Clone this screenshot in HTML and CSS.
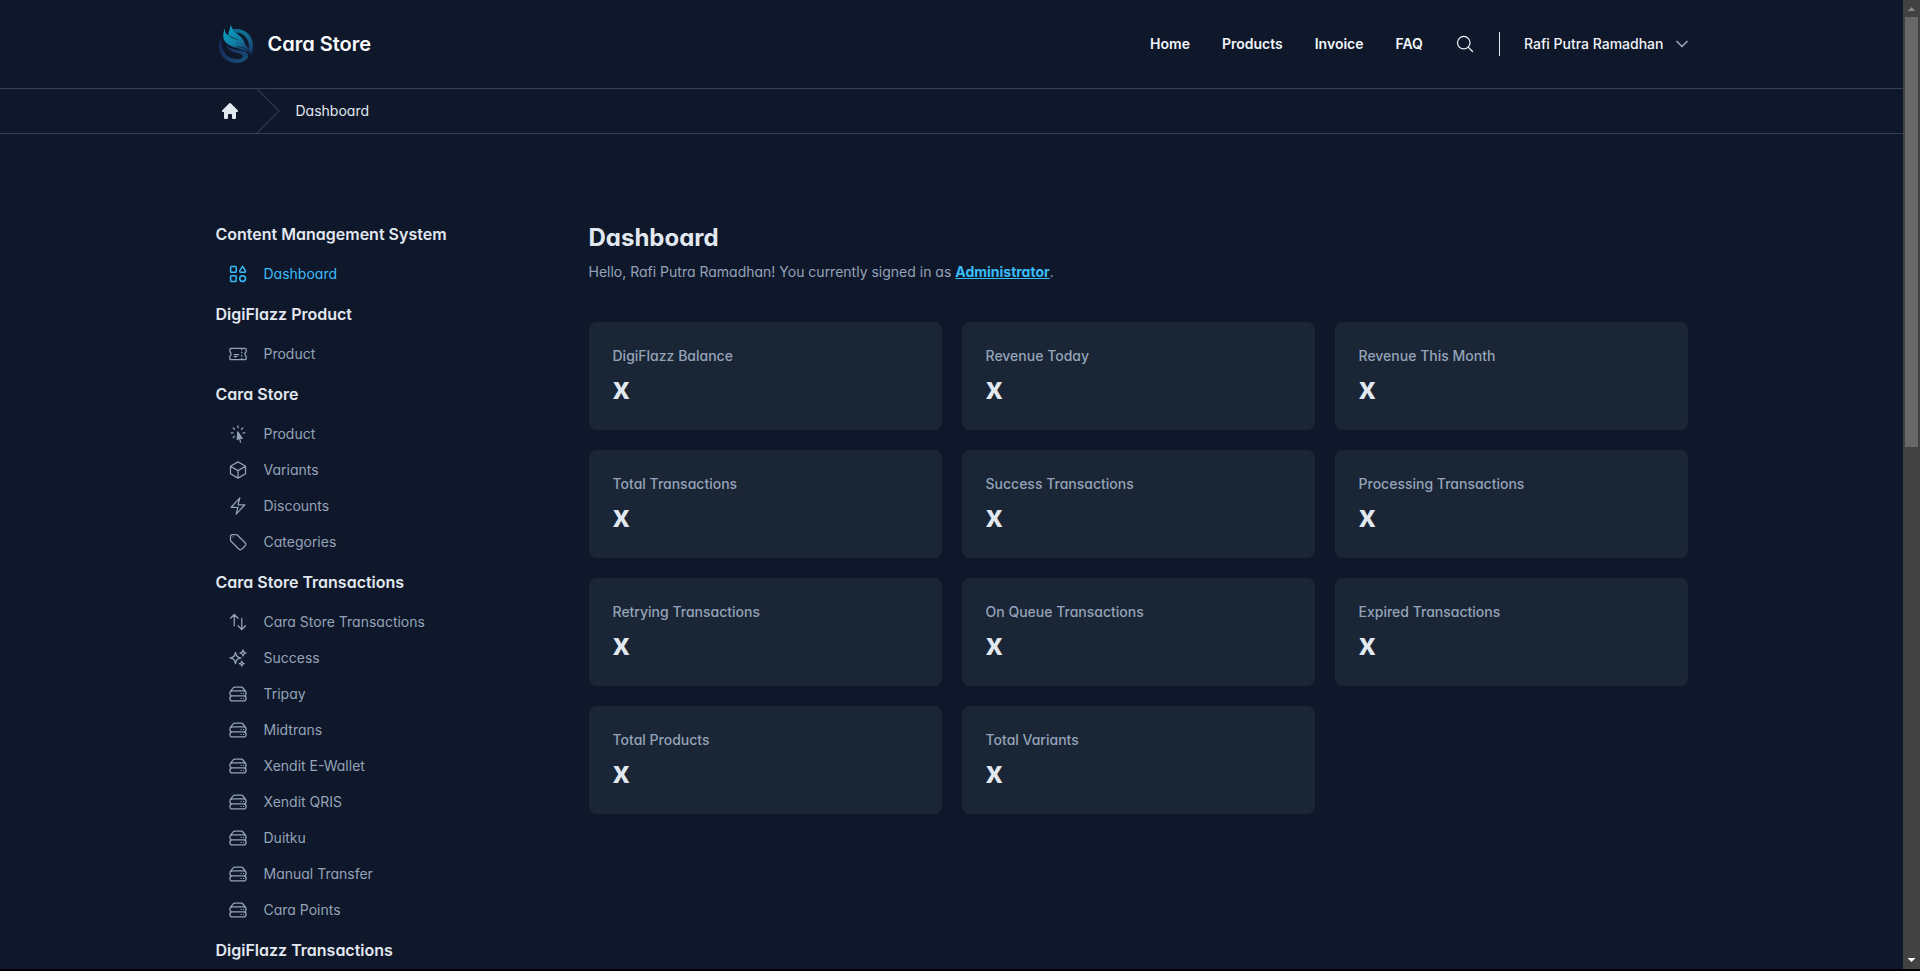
FILE: index.html
```html
<!DOCTYPE html>
<html lang="en">
<head>
<meta charset="utf-8">
<meta name="viewport" content="width=device-width, initial-scale=1">
<title>Dashboard - Cara Store</title>
<link rel="stylesheet" href="styles.css">
</head>
<body>
<svg class="sprite" aria-hidden="true">
  <symbol id="i-grid" viewBox="0 0 20 20"><rect x="2.6" y="2.6" width="5.6" height="5.6" rx="0.8"/><rect x="2.6" y="11.8" width="5.6" height="5.6" rx="0.8"/><circle cx="14.6" cy="14.6" r="2.9"/><path d="M14.6 2.4 17.4 6.6Q17.6 8.2 16.6 8.2H12.6Q11.6 8.2 11.8 6.6Z"/></symbol>
  <symbol id="i-ticket" viewBox="0 0 24 24"><path d="M16.5 6v.75m0 3v.75m0 3v.75m0 3V18m-9-5.25h5.25M7.5 15h3M3.375 5.25c-.621 0-1.125.504-1.125 1.125v3.026a2.999 2.999 0 010 5.198v3.026c0 .621.504 1.125 1.125 1.125h17.25c.621 0 1.125-.504 1.125-1.125v-3.026a2.999 2.999 0 010-5.198V6.375c0-.621-.504-1.125-1.125-1.125H3.375z"/></symbol>
  <symbol id="i-cursor" viewBox="0 0 24 24"><path fill="currentColor" d="M15.042 21.672L13.684 16.6m0 0l-2.51 2.225.569-9.47 5.227 7.917-3.286-.672z"/><path d="M12 2.25V4.5m5.834.166l-1.591 1.591M20.25 10.5H18M7.757 14.743l-1.59 1.59M6 10.5H3.75m4.007-4.243l-1.59-1.59"/></symbol>
  <symbol id="i-cube" viewBox="0 0 24 24"><path d="M21 7.5l-9-5.25L3 7.5m18 0l-9 5.25m9-5.25v9l-9 5.25M3 7.5l9 5.25M3 7.5v9l9 5.25m0-9v9"/></symbol>
  <symbol id="i-bolt" viewBox="0 0 24 24"><path d="M3.75 13.5l10.5-11.25L12 10.5h8.25L9.75 21.75 12 13.5H3.75z"/></symbol>
  <symbol id="i-tag" viewBox="0 0 24 24"><path d="M9.568 3H5.25A2.25 2.25 0 003 5.25v4.318c0 .597.237 1.17.659 1.591l9.581 9.581c.699.699 1.78.872 2.607.33a18.095 18.095 0 005.223-5.223c.542-.827.369-1.908-.33-2.607L11.16 3.66A2.25 2.25 0 009.568 3z"/><path d="M6 6h.008v.008H6V6z"/></symbol>
  <symbol id="i-arrows" viewBox="0 0 24 24"><path d="M3 7.5L7.5 3m0 0L12 7.5M7.5 3v13.5m13.5 0L16.5 21m0 0L12 16.5m4.5 4.5V7.5"/></symbol>
  <symbol id="i-sparkles" viewBox="0 0 24 24"><path d="M9.813 15.904L9 18.75l-.813-2.846a4.5 4.5 0 00-3.09-3.09L2.25 12l2.846-.813a4.5 4.5 0 003.09-3.09L9 5.25l.813 2.846a4.5 4.5 0 003.09 3.09L15.75 12l-2.846.813a4.5 4.5 0 00-3.09 3.09zM18.259 8.715L18 9.75l-.259-1.035a3.375 3.375 0 00-2.455-2.456L14.25 6l1.036-.259a3.375 3.375 0 002.455-2.456L18 2.25l.259 1.035a3.375 3.375 0 002.456 2.456L21.75 6l-1.035.259a3.375 3.375 0 00-2.456 2.456zM16.894 20.567L16.5 21.75l-.394-1.183a2.25 2.25 0 00-1.423-1.423L13.5 18.75l1.183-.394a2.25 2.25 0 001.423-1.423l.394-1.183.394 1.183a2.25 2.25 0 001.423 1.423l1.183.394-1.183.394a2.25 2.25 0 00-1.423 1.423z"/></symbol>
  <symbol id="i-server" viewBox="0 0 24 24"><path d="M5.25 14.25h13.5m-13.5 0a3 3 0 01-3-3m3 3a3 3 0 100 6h13.5a3 3 0 100-6m-16.5-3a3 3 0 013-3h13.5a3 3 0 013 3m-19.5 0a4.5 4.5 0 01.9-2.7L5.737 5.1a3.375 3.375 0 012.7-1.35h7.126c1.062 0 2.062.5 2.7 1.35l2.587 3.45a4.5 4.5 0 01.9 2.7m0 0a3 3 0 01-3 3m0 3h.008v.008h-.008v-.008zm0-6h.008v.008h-.008v-.008zm-3 6h.008v.008h-.008v-.008zm0-6h.008v.008h-.008v-.008z"/></symbol>
</svg>
<div class="window">
  <div class="page">
    <header class="header">
      <div class="container header-row">
        <a class="brand" href="#">
          <svg class="logo" viewBox="0 0 40 40" aria-hidden="true">
            <defs>
              <linearGradient id="ring" x1="0.6" y1="0" x2="0.3" y2="1"><stop offset="0" stop-color="#0d7f9f"/><stop offset="0.5" stop-color="#17507a"/><stop offset="1" stop-color="#1b2352"/></linearGradient>
              <linearGradient id="flame" x1="0" y1="0" x2="0.8" y2="1"><stop offset="0" stop-color="#0aa5c4"/><stop offset="0.5" stop-color="#0e84a8"/><stop offset="1" stop-color="#1b3566"/></linearGradient>
              <linearGradient id="wave" x1="0" y1="0" x2="1" y2="1"><stop offset="0" stop-color="#1b2250"/><stop offset="1" stop-color="#17507c"/></linearGradient>
            </defs>
            <path fill="url(#ring)" d="M17 5.200C28 3.500 37 11 37 22C37 25 36.400 28 35.300 30.500L32.400 27.500C34.800 18.500 30 8.500 19.500 8.400Z"/>
            <path fill="url(#wave)" d="M4.500 14.500C1.500 20 2.500 29 8.500 34.500C14.500 40 25 40.500 30.500 35.500C34.500 31.500 31 27.500 25.500 26.500C19 25.500 13.500 25 9.500 20.500C12 27 18 28.500 23 29.500C28 30.500 28.500 34 23 35C14.500 36 6.500 30 6 21.500C5.800 18.500 5.500 16.500 4.500 14.500Z"/>
            <path fill="url(#flame)" d="M9.200 4C8.200 7.500 9.500 9.500 12.500 11.500C12 8 14.300 5.500 14.500 1C16.200 3.500 17 6 19.500 8.500C23 11.500 27.500 14 28.500 18.500C29.500 22.500 34 24.500 36 31C31 26 25.500 25.500 19 23.500C11 21 6.800 17 7.300 11C7.500 8.500 7.800 6 9.200 4Z"/>
            <path fill="none" stroke="#0f172a" stroke-width="0.7" d="M13 11.500C16 14.500 19 14 22 16M20 23C26 22.500 31 24.500 34.500 28.500"/>
          </svg>
          <span>Cara Store</span>
        </a>
        <nav class="nav" aria-label="Main">
          <a href="#">Home</a>
          <a href="#">Products</a>
          <a href="#">Invoice</a>
          <a href="#">FAQ</a>
          <button class="search" type="button" aria-label="Search"><svg class="icon" viewBox="0 0 24 24"><path d="M21 21l-5.197-5.197m0 0A7.5 7.5 0 105.196 5.196a7.5 7.5 0 0010.607 10.607z"/></svg></button>
          <span class="divider"></span>
          <button class="user" type="button">Rafi Putra Ramadhan<svg class="chevron" viewBox="3 3 18 18" aria-hidden="true"><path d="M19.500 8.250l-7.500 7.500-7.500-7.500"/></svg></button>
        </nav>
      </div>
    </header>
    <nav class="crumbs" aria-label="Breadcrumb">
      <div class="container crumbs-row">
        <a class="crumb-home" href="#" aria-label="Home"><svg viewBox="0 0 20 20"><path d="M9.293 2.293a1 1 0 011.414 0l7 7A1 1 0 0117 11h-1v6a1 1 0 01-1 1h-2a1 1 0 01-1-1v-3a1 1 0 00-1-1H9a1 1 0 00-1 1v3a1 1 0 01-1 1H5a1 1 0 01-1-1v-6H3a1 1 0 01-.707-1.707l7-7z"/></svg></a>
        <svg class="crumb-sep" viewBox="0 0 24 44" preserveAspectRatio="none" aria-hidden="true"><path d="M.293 0l22 22-22 22h1.414l22-22-22-22H.293z"/></svg>
        <a class="crumb" href="#">Dashboard</a>
      </div>
    </nav>
    <div class="container layout">
      <aside class="sidebar">
        <h2>Content Management System</h2>
        <a class="item active" href="#"><svg class="icon"><use href="#i-grid"/></svg>Dashboard</a>
        <h2>DigiFlazz Product</h2>
        <a class="item" href="#"><svg class="icon"><use href="#i-ticket"/></svg>Product</a>
        <h2>Cara Store</h2>
        <a class="item" href="#"><svg class="icon"><use href="#i-cursor"/></svg>Product</a>
        <a class="item" href="#"><svg class="icon"><use href="#i-cube"/></svg>Variants</a>
        <a class="item" href="#"><svg class="icon"><use href="#i-bolt"/></svg>Discounts</a>
        <a class="item" href="#"><svg class="icon"><use href="#i-tag"/></svg>Categories</a>
        <h2>Cara Store Transactions</h2>
        <a class="item" href="#"><svg class="icon"><use href="#i-arrows"/></svg>Cara Store Transactions</a>
        <a class="item" href="#"><svg class="icon"><use href="#i-sparkles"/></svg>Success</a>
        <a class="item" href="#"><svg class="icon"><use href="#i-server"/></svg>Tripay</a>
        <a class="item" href="#"><svg class="icon"><use href="#i-server"/></svg>Midtrans</a>
        <a class="item" href="#"><svg class="icon"><use href="#i-server"/></svg>Xendit E-Wallet</a>
        <a class="item" href="#"><svg class="icon"><use href="#i-server"/></svg>Xendit QRIS</a>
        <a class="item" href="#"><svg class="icon"><use href="#i-server"/></svg>Duitku</a>
        <a class="item" href="#"><svg class="icon"><use href="#i-server"/></svg>Manual Transfer</a>
        <a class="item" href="#"><svg class="icon"><use href="#i-server"/></svg>Cara Points</a>
        <h2>DigiFlazz Transactions</h2>
      </aside>
      <main class="main">
        <h1>Dashboard</h1>
        <p class="intro">Hello, Rafi Putra Ramadhan! You currently signed in as <a href="#">Administrator</a>.</p>
        <dl class="cards">
          <div class="card"><dt>DigiFlazz Balance</dt><dd>x</dd></div>
          <div class="card"><dt>Revenue Today</dt><dd>x</dd></div>
          <div class="card"><dt>Revenue This Month</dt><dd>x</dd></div>
          <div class="card"><dt>Total Transactions</dt><dd>x</dd></div>
          <div class="card"><dt>Success Transactions</dt><dd>x</dd></div>
          <div class="card"><dt>Processing Transactions</dt><dd>x</dd></div>
          <div class="card"><dt>Retrying Transactions</dt><dd>x</dd></div>
          <div class="card"><dt>On Queue Transactions</dt><dd>x</dd></div>
          <div class="card"><dt>Expired Transactions</dt><dd>x</dd></div>
          <div class="card"><dt>Total Products</dt><dd>x</dd></div>
          <div class="card"><dt>Total Variants</dt><dd>x</dd></div>
        </dl>
      </main>
    </div>
  </div>
  <div class="scrollbar" aria-hidden="true">
    <svg class="arrow" viewBox="0 0 17 17"><path fill="#868686" d="M8.500 7 12 10.500V11H5v-.5z"/></svg>
    <div class="track"><div class="thumb"></div></div>
    <svg class="arrow" viewBox="0 0 17 17"><path fill="#fff" d="M5 6h7v.5L8.500 10 5 6.500z"/></svg>
  </div>
</div>
</body>
</html>
```

FILE: styles.css
```css
*, *::before, *::after { box-sizing: border-box; }
body, h1, h2, p, dl, dd { margin: 0; }
body {
  background: #0f172a;
  color: #e2e8f0;
  font-family: Inter, "Liberation Sans", sans-serif;
  font-size: 14px;
  line-height: 20px;
  font-feature-settings: "cv11";
  overflow: hidden;
}
a { color: inherit; text-decoration: none; }
button { border: 0; padding: 0; background: none; color: inherit; font: inherit; cursor: pointer; }
svg { display: block; flex: none; }
.sprite { position: absolute; width: 0; height: 0; }
.icon, .chevron {
  fill: none;
  stroke: currentColor;
  stroke-width: 1.5;
  stroke-linecap: round;
  stroke-linejoin: round;
}
.icon { width: 20px; height: 20px; }

.window { display: flex; height: 100vh; border-bottom: 2px solid #000; }
.page { flex: 1; min-width: 0; overflow: hidden; }
.container { max-width: 1536px; margin: 0 auto; padding: 0 32px; }

.header-row { display: flex; align-items: center; justify-content: space-between; height: 88px; }
.brand { display: flex; align-items: center; gap: 12px; color: #f8fafc; font-size: 20px; font-weight: 600; line-height: 28px; }
.logo { width: 40px; height: 40px; }
.nav { display: flex; align-items: center; gap: 32px; color: #f1f5f9; font-weight: 600; font-feature-settings: normal; }
.divider { width: 1px; height: 24px; margin: 0 -8px; background: #e2e8f0; }
.user { display: flex; align-items: center; gap: 12px; font-weight: 500; font-feature-settings: normal; }
.chevron { width: 12px; height: 12px; color: #94a3b8; stroke-width: 2.5; }

.crumbs { border-top: 1px solid #334155; border-bottom: 1px solid #334155; }
.crumbs-row { display: flex; align-items: center; gap: 16px; height: 44px; }
.crumb-home { padding-left: 4px; }
.crumb-home svg { width: 20px; height: 20px; fill: #e2e8f0; }
.crumb-sep { width: 24px; height: 44px; fill: #334155; }

.layout { display: grid; grid-template-columns: repeat(4, minmax(0, 1fr)); gap: 20px; padding-top: 78px; }
.sidebar h2 { padding: 10px 0; font-size: 16px; font-weight: 600; line-height: 24px; }
.item { display: flex; align-items: center; gap: 16px; padding: 8px 12px; color: #94a3b8; }
.item.active { color: #38bdf8; }

.main { grid-column: span 3; padding-top: 10px; }
h1 { font-size: 24px; font-weight: 700; line-height: 32px; }
.intro { margin-top: 8px; color: #94a3b8; }
.intro a { color: #38bdf8; font-weight: 700; text-decoration: underline; }
.cards { display: grid; grid-template-columns: repeat(3, minmax(0, 1fr)); gap: 20px; margin-top: 40px; }
.card { padding: 24px; border-radius: 8px; background: #1a2535; }
.card dt { color: #94a3b8; font-weight: 500; }
.card dd { margin-top: 4px; font-size: 30px; font-weight: 700; line-height: 36px; }

.scrollbar { display: flex; flex-direction: column; width: 17px; background: #424242; }
.arrow { width: 17px; height: 17px; }
.track { flex: 1; padding: 0 2px; }
.thumb { height: 46%; background: #686868; }
```
